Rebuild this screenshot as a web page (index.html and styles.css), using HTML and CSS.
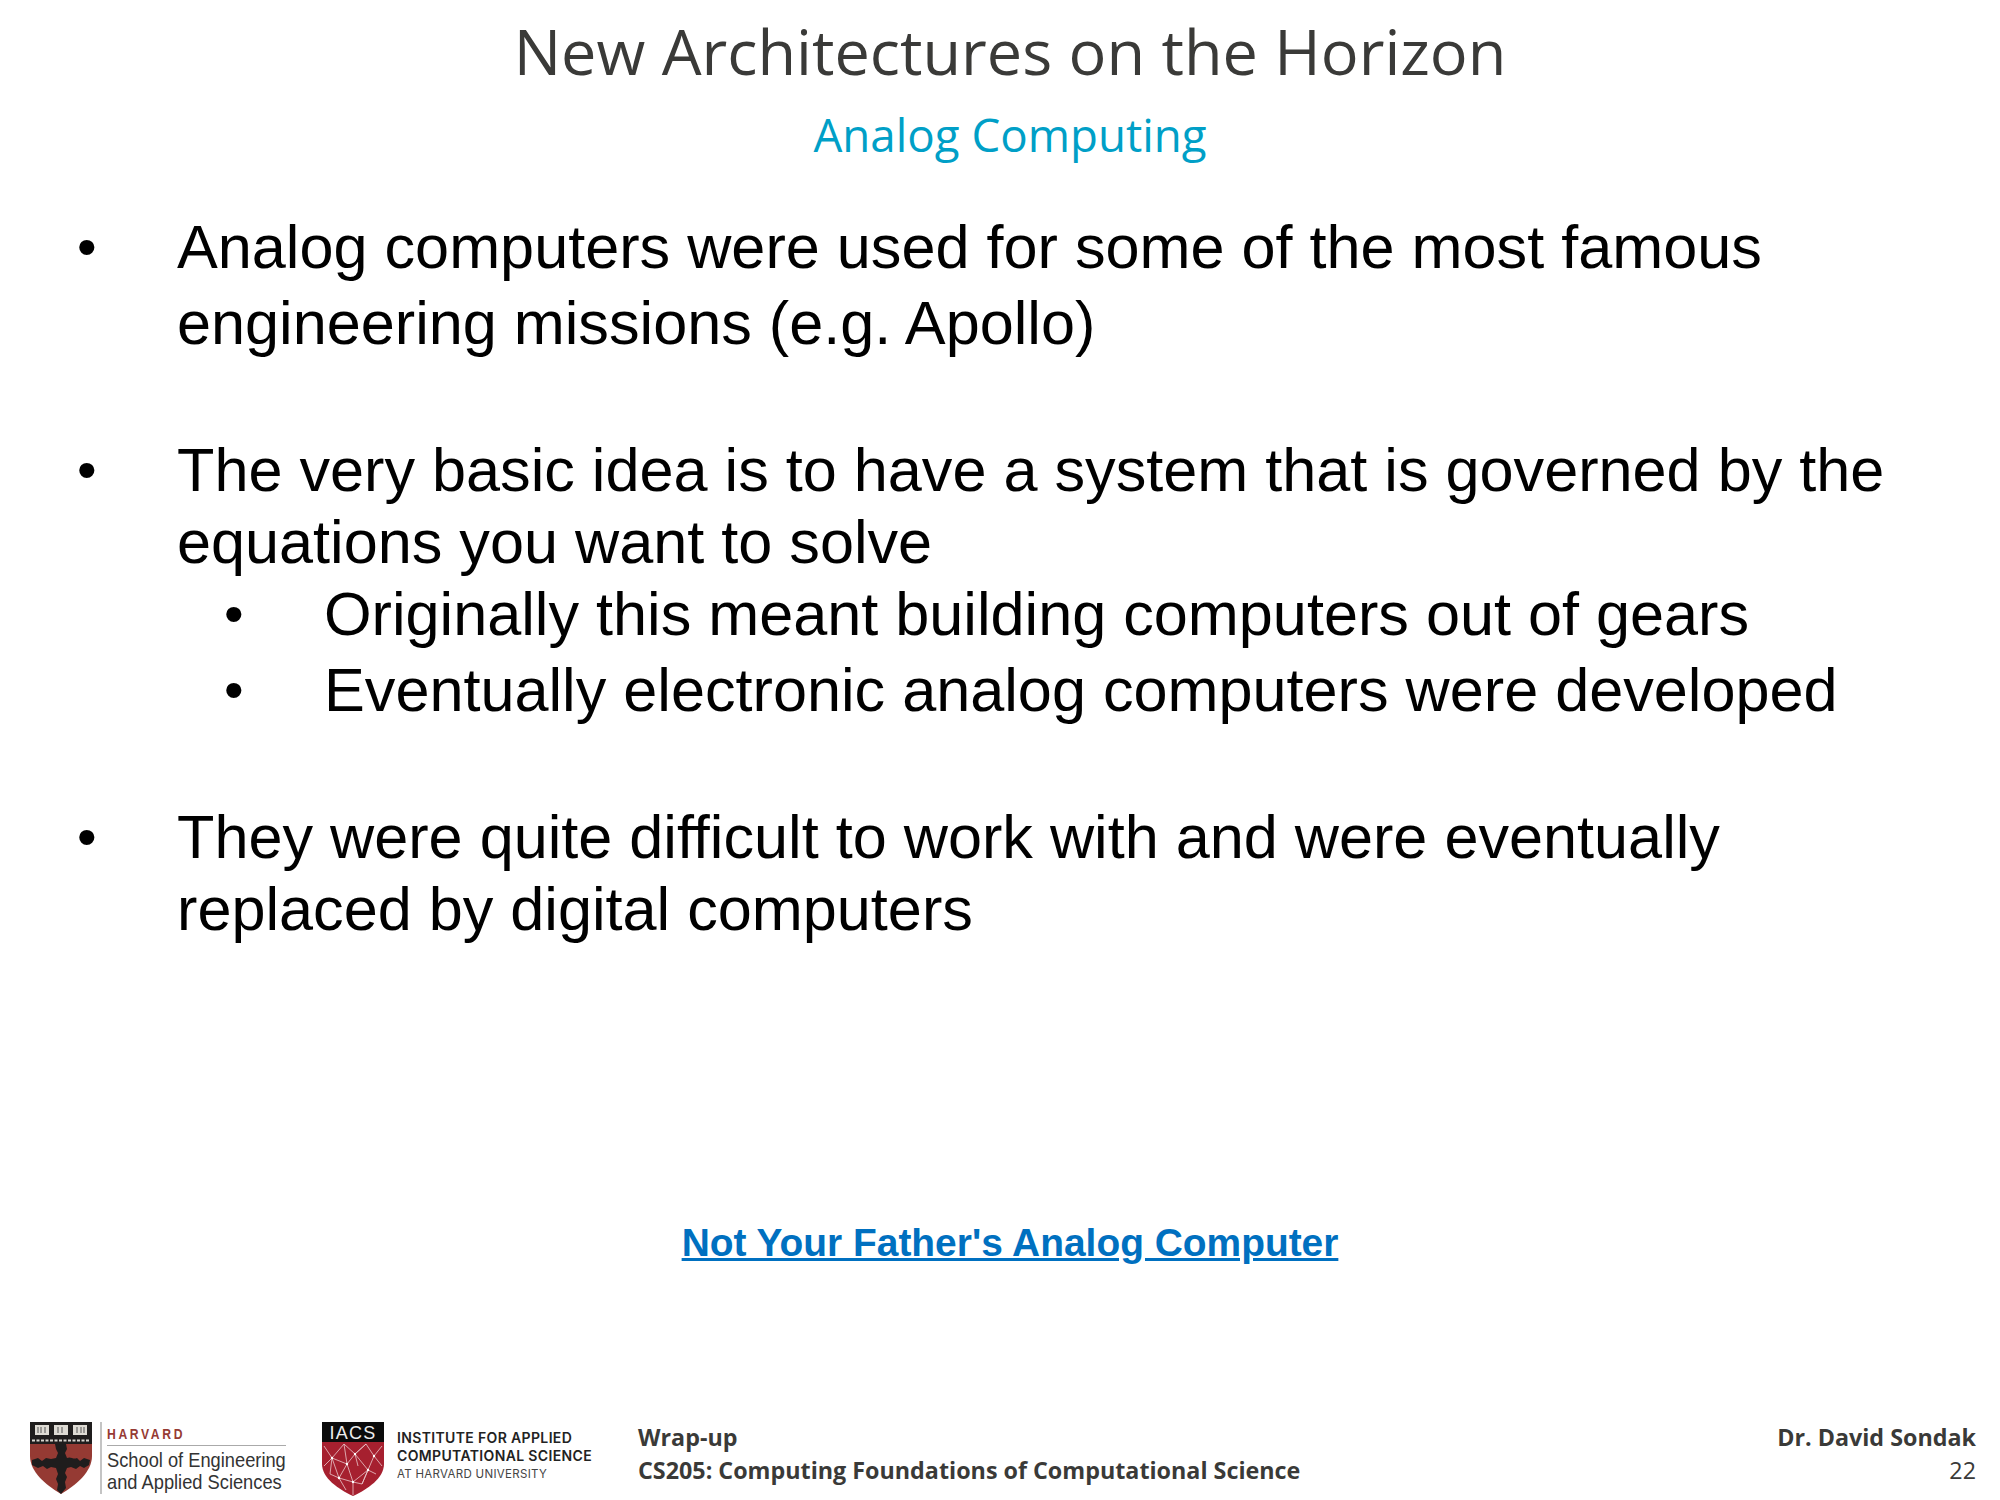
FILE: index.html
```html
<!DOCTYPE html>
<html lang="en">
<head>
<meta charset="utf-8">
<title>New Architectures on the Horizon</title>
<link rel="stylesheet" href="styles.css">
</head>
<body>
<main class="slide">
  <header class="head">
    <h1 class="title">New Architectures on the Horizon</h1>
    <h2 class="subtitle">Analog Computing</h2>
  </header>
  <section class="content">
    <div class="item tall"><span class="bullet">•</span><p>Analog computers were used for some of the most famous<br>engineering missions (e.g. Apollo)</p></div>
    <div class="item gap-a"><span class="bullet">•</span><p>The very basic idea is to have a system that is governed by the<br>equations you want to solve</p></div>
    <div class="item sub"><span class="bullet">•</span><p>Originally this meant building computers out of gears</p></div>
    <div class="item sub sub-next"><span class="bullet">•</span><p>Eventually electronic analog computers were developed</p></div>
    <div class="item gap-b"><span class="bullet">•</span><p>They were quite difficult to work with and were eventually<br>replaced by digital computers</p></div>
  </section>
  <a class="link" href="#">Not Your Father's Analog Computer</a>
  <footer class="foot">
    <div class="seas">
      <svg class="shield-a" viewBox="0 0 62 72" aria-hidden="true">
        <path d="M0 0H62V34C62 50 46 63 31 72C16 63 0 50 0 34Z" fill="#953a33"/>
        <path d="M0 0H62V22H0Z" fill="#1f1d1d"/>
        <path d="M5 3H19V13H5ZM24 3H38V13H24ZM43 3H57V13H43Z" fill="#dedbd4"/>
        <path d="M8 5V11M11 5V11M15 5V11M28 5V11M32 5V11M47 5V11M51 5V11M54 5V11" stroke="#555" stroke-width="1"/>
        <path d="M2 18.500H60" stroke="#d8d5cf" stroke-width="2" stroke-dasharray="3 1.500"/>
        <path d="M25 22H36L37 27L35 31L37 36C41 34 43 38 47 36L50 39L54 36L60 38L59 43L54 46L50 44L46 47L41 45L37 46L35 51L37 55L35 60L36 66L31 72L27 68L28 62L26 57L28 52L26 46L21 45L17 47L13 44L8 46L2 43L2 38L8 36L12 39L16 36L21 37L26 36L28 31L26 27Z" fill="#1f1d1d"/>
      </svg>
      <div class="seas-text">
        <div class="harvard"><span class="narrow">HARVARD</span></div>
        <div class="seas-name narrow">School of Engineering<br>and Applied Sciences</div>
      </div>
    </div>
    <div class="iacs">
      <svg class="shield-b" viewBox="0 0 62 74" aria-hidden="true">
        <path d="M0 20H62V42C62 56 46 67 31 74C16 67 0 56 0 42Z" fill="#a6202f"/>
        <path d="M0 0H62V20H0Z" fill="#0b0b0b"/>
        <path d="M2 24L10 36L2 44M10 36L22 22L33 32L44 22L52 34L60 24M60 44L52 34M10 36L25 42L33 32L46 48L52 34M25 42L17 56L8 52L10 36M17 56L31 60L46 48L40 62L31 60L31 73M25 42L31 60M17 56L24 68M40 62L46 48L54 52M33 32L36 44M22 22L25 42M44 22L33 32M10 36L17 56" fill="none" stroke="#eac9cd" stroke-width=".8"/>
        <path d="M10 36h.01M33 32h.01M25 42h.01M46 48h.01M52 34h.01M17 56h.01M31 60h.01" stroke="#fff" stroke-width="2.400" stroke-linecap="round"/>
        <text class="iacs-mark" x="31" y="16.500" text-anchor="middle">IACS</text>
      </svg>
      <div class="iacs-text">
        <div>INSTITUTE FOR APPLIED</div>
        <div>COMPUTATIONAL SCIENCE</div>
        <div class="iacs-small">AT HARVARD UNIVERSITY</div>
      </div>
    </div>
    <div class="course">
      <div>Wrap-up</div>
      <div>CS205: Computing Foundations of Computational Science</div>
    </div>
    <div class="author">
      <div class="author-name">Dr. David Sondak</div>
      <div class="page">22</div>
    </div>
  </footer>
</main>
</body>
</html>
```
FILE: styles.css
```css
* { box-sizing: border-box; }
html, body { margin: 0; background: #fff; }
.slide { width: 2000px; height: 1500px; display: flex; flex-direction: column; overflow: hidden; position: relative; }
.head { text-align: center; padding-top: 13px; padding-left: 20px; height: 199px; }
.title { margin: 0; font: 400 63px/76px "Open Sans", sans-serif; color: #3a3a38; }
.subtitle { margin: 15px 0 0; font: 400 45.7px/60px "Open Sans", sans-serif; color: #009fc7; }
.content { padding-left: 76px; font: 400 61.2px/72px "Liberation Sans", sans-serif; color: #000; margin-top: 10px; }
.item { display: flex; align-items: baseline; }
.item p { margin: 0; }
.tall { line-height: 76px; }
.bullet { width: 100px; margin-left: 1px; flex: none; font-size: 56px; line-height: 1; transform: translateY(-2px); }
.sub { padding-left: 147px; }
.sub-next { margin-top: 4px; }
.gap-a { margin-top: 73px; }
.gap-b { margin-top: 75px; }
.link { align-self: center; margin-left: 20px; margin-top: 275px; font: 700 38.9px/46px "Liberation Sans", sans-serif; color: #0070c0; }
.foot { position: absolute; left: 0; right: 0; top: 1420px; height: 80px; display: flex; }
.seas { display: flex; width: 322px; padding-left: 30px; }
.shield-a { width: 62px; height: 72px; margin-top: 2px; }
.seas-text { margin-left: 8px; border-left: 2px solid #c4c4c4; padding-left: 5px; height: 72px; margin-top: 2px; width: 186px; }
.narrow { display: inline-block; transform: scaleX(.87); transform-origin: left center; white-space: nowrap; }
.harvard { font: 700 14px/20px "Liberation Sans", sans-serif; letter-spacing: 3px; color: #963a33; border-bottom: 1px solid #aaa; height: 24px; padding-top: 2px; }
.seas-name { font: 400 21px/22px "Liberation Sans", sans-serif; color: #333; padding-top: 3px; }
.iacs { display: flex; width: 316px; }
.shield-b { width: 62px; height: 74px; margin-top: 2px; }
.iacs-mark { font: 400 18px "Liberation Sans", sans-serif; letter-spacing: 1.2px; fill: #eee; }
.iacs-text { margin-left: 13px; padding-top: 9px; font: 600 14px/18px Inter, sans-serif; letter-spacing: .35px; color: #222; white-space: nowrap; }
.iacs-small { font-weight: 400; font-size: 11.5px; letter-spacing: .3px; color: #444; }
.course { font: 700 23.3px/33px "Open Sans", sans-serif; color: #3a3a38; padding-top: 1px; }
.author { margin-left: auto; padding-right: 24px; padding-top: 1px; text-align: right; font: 400 23.3px/33px "Open Sans", sans-serif; color: #3a3a38; }
.author-name { font-weight: 700; }
```
